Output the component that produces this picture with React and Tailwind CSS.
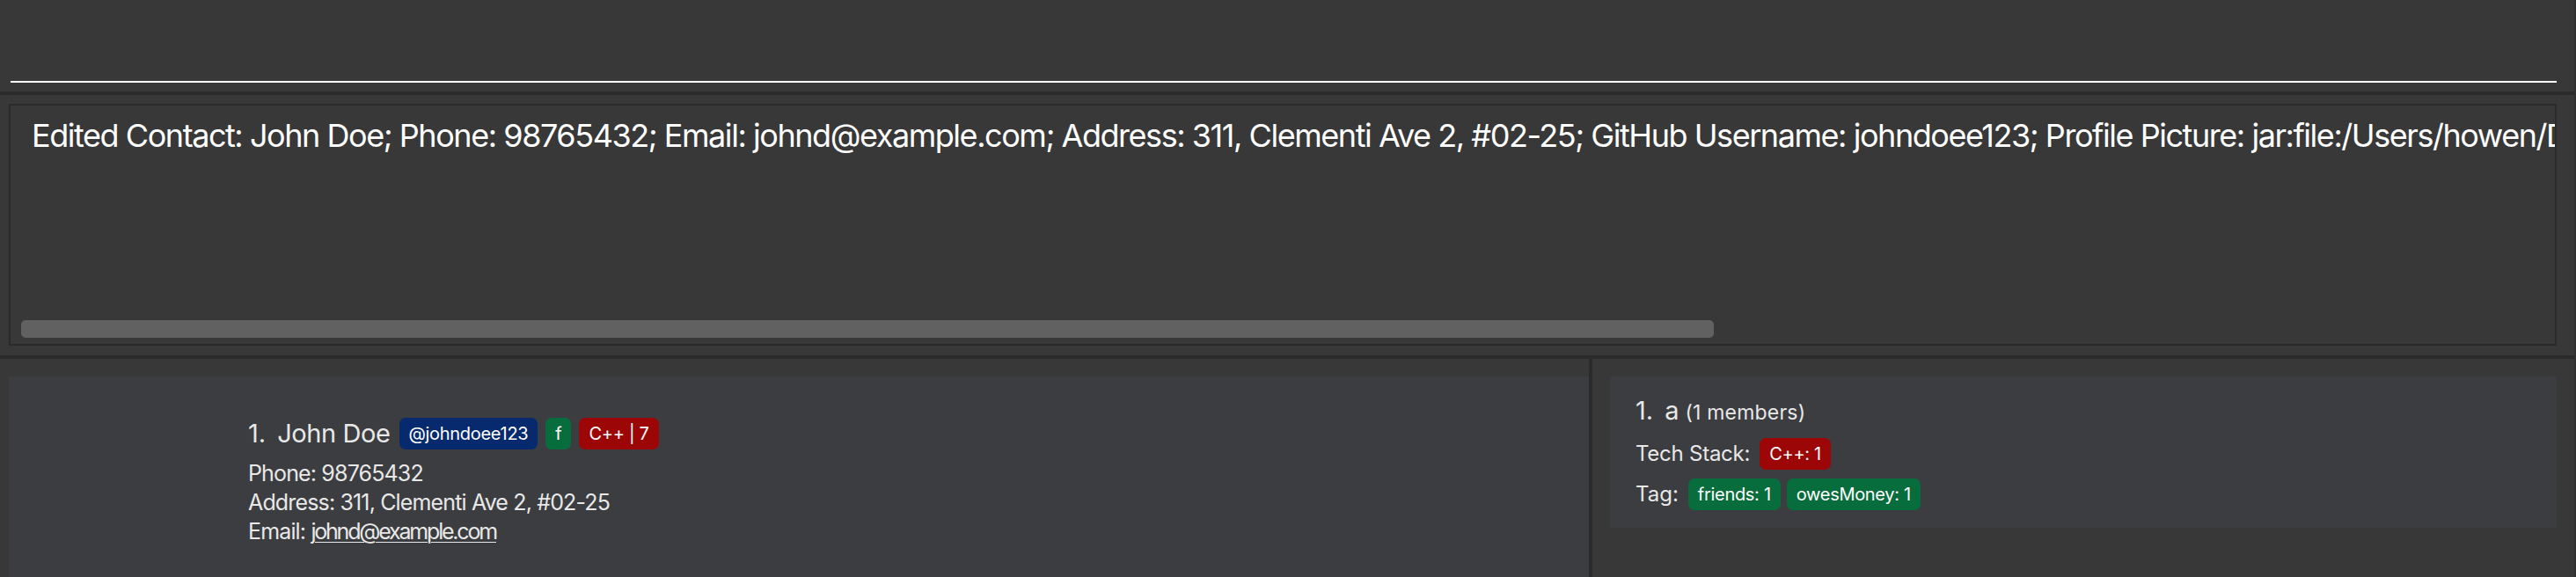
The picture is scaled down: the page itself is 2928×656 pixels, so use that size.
import React from "react";

const resultText =
  "Edited Contact: John Doe; Phone: 98765432; Email: johnd@example.com; Address: 311, Clementi Ave 2, #02-25; GitHub Username: johndoee123; Profile Picture: jar:file:/Users/howen/Desktop/addressbook.jar!/images/default_profile.png; Tags: [friends]";

function Badge({ color, children }) {
  return (
    <span
      className={`${color} h-[36px] px-[11px] rounded-[7px] flex items-center text-[20px] leading-none tracking-[-0.3px] text-white`}
    >
      {children}
    </span>
  );
}

function PersonCard() {
  return (
    <div className="bg-[#3c3d40] h-full pl-[272px] pt-[47px] text-[#e8e8e8]">
      <div className="flex items-center h-[36px]">
        <span className="text-[29px] leading-[36px]">1.</span>
        <span className="text-[29px] leading-[36px] tracking-[-0.4px] ml-[13px]">John Doe</span>
        <div className="flex items-center gap-[9px] ml-[10px]">
          <Badge color="bg-[#072a6e]">@johndoee123</Badge>
          <Badge color="bg-[#086d3c]">f</Badge>
          <Badge color="bg-[#9c0606]">C++ | 7</Badge>
        </div>
      </div>
      <div className="mt-[11px] text-[25px] leading-[33px] tracking-[-0.85px]">
        <div>Phone: 98765432</div>
        <div>Address: 311, Clementi Ave 2, #02-25</div>
        <div>
          Email:{" "}
          <span className="underline decoration-1 underline-offset-[3px] tracking-[-2.2px]">
            johnd@example.com
          </span>
        </div>
      </div>
    </div>
  );
}

function GroupCard() {
  return (
    <div className="bg-[#3c3d40] h-[172px] pl-[29px] pt-[21px] text-[#e8e8e8]">
      <div className="flex items-baseline h-[36px]">
        <span className="text-[29px] leading-[36px]">1.</span>
        <span className="text-[29px] leading-[36px] ml-[13px]">a</span>
        <span className="text-[23px] leading-[36px] tracking-[0.2px] ml-[7px]">(1 members)</span>
      </div>
      <div className="flex items-center gap-[11px] mt-[13px]">
        <span className="text-[24px] leading-[36px] tracking-[-0.25px]">Tech Stack:</span>
        <Badge color="bg-[#9c0606]">C++: 1</Badge>
      </div>
      <div className="flex items-center mt-[10px]">
        <span className="text-[24px] leading-[36px]">Tag:</span>
        <div className="flex items-center gap-[7px] ml-[11px]">
          <Badge color="bg-[#086d3c]">friends: 1</Badge>
          <Badge color="bg-[#086d3c]">owesMoney: 1</Badge>
        </div>
      </div>
    </div>
  );
}

export default function App() {
  return (
    <div className="w-[2928px] h-[656px] bg-[#383838] flex overflow-hidden font-['Inter',sans-serif]">
      <div className="flex-1 min-w-0 flex flex-col">
        {/* command box */}
        <div className="h-[104px] flex flex-col pl-[12px] pr-[20px]">
          <div className="h-[92px]" />
          <div className="h-[2px] bg-white" />
        </div>
        <div className="h-[4px] bg-[#2b2b2b]" />

        {/* result display */}
        <div className="h-[296px] pl-[10px] pr-[20px] pt-[10px]">
          <div className="h-[275px] border-2 border-[#2a2a2a] flex flex-col justify-between overflow-hidden">
            <div className="pl-[24px] pt-[12px] text-[36px] leading-[44px] tracking-[-1.45px] text-white whitespace-nowrap overflow-hidden">
              {resultText}
            </div>
            <div className="ml-[12px] mb-[7px] w-[1924px] h-[20px] rounded-[5px] bg-[#616161]" />
          </div>
        </div>
        <div className="h-[4px] bg-[#2b2b2b]" />

        {/* lists */}
        <div className="flex-1 flex min-w-0">
          <div className="w-[1806px] shrink-0 pl-[10px] pt-[20px]">
            <PersonCard />
          </div>
          <div className="w-[4px] shrink-0 bg-[#2b2b2b]" />
          <div className="flex-1 min-w-0 pl-[20px] pr-[20px] pt-[20px]">
            <GroupCard />
          </div>
        </div>
      </div>
      <div className="w-[2px] bg-[#303030]" />
    </div>
  );
}
